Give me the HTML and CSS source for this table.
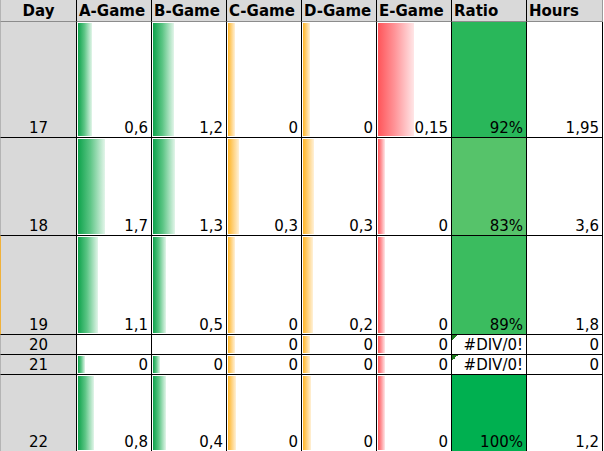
FILE: index.html
```html
<!DOCTYPE html>
<html>
<head>
<meta charset="utf-8">
<link rel="stylesheet" href="styles.css">
</head>
<body>
<div class="sheet">
  <div class="hd day">Day</div>
  <div class="hd">A-Game</div>
  <div class="hd">B-Game</div>
  <div class="hd">C-Game</div>
  <div class="hd">D-Game</div>
  <div class="hd">E-Game</div>
  <div class="hd">Ratio</div>
  <div class="hd last">Hours</div>

  <div class="c day">17</div>
  <div class="c g" style="--w:14px">0,6</div>
  <div class="c g" style="--w:21px">1,2</div>
  <div class="c o" style="--w:7px">0</div>
  <div class="c o" style="--w:7px">0</div>
  <div class="c r" style="--w:36px">0,15</div>
  <div class="c ratio p92">92%</div>
  <div class="c last">1,95</div>

  <div class="c day">18</div>
  <div class="c g" style="--w:27px">1,7</div>
  <div class="c g" style="--w:22px">1,3</div>
  <div class="c o" style="--w:11px">0,3</div>
  <div class="c o" style="--w:11px">0,3</div>
  <div class="c r" style="--w:7px">0</div>
  <div class="c ratio p83">83%</div>
  <div class="c last">3,6</div>

  <div class="c day sel">19</div>
  <div class="c g" style="--w:20px">1,1</div>
  <div class="c g" style="--w:13px">0,5</div>
  <div class="c o" style="--w:7px">0</div>
  <div class="c o" style="--w:10px">0,2</div>
  <div class="c r" style="--w:7px">0</div>
  <div class="c ratio p89">89%</div>
  <div class="c last">1,8</div>

  <div class="c day">20</div>
  <div class="c"></div>
  <div class="c"></div>
  <div class="c o" style="--w:7px">0</div>
  <div class="c o" style="--w:7px">0</div>
  <div class="c r" style="--w:7px">0</div>
  <div class="c err">#DIV/0!</div>
  <div class="c last">0</div>

  <div class="c day">21</div>
  <div class="c g" style="--w:7px">0</div>
  <div class="c g" style="--w:7px">0</div>
  <div class="c o" style="--w:7px">0</div>
  <div class="c o" style="--w:7px">0</div>
  <div class="c r" style="--w:7px">0</div>
  <div class="c err">#DIV/0!</div>
  <div class="c last">0</div>

  <div class="c day">22</div>
  <div class="c g" style="--w:16px">0,8</div>
  <div class="c g" style="--w:13px">0,4</div>
  <div class="c o" style="--w:8px">0</div>
  <div class="c o" style="--w:8px">0</div>
  <div class="c r" style="--w:7px">0</div>
  <div class="c ratio p100">100%</div>
  <div class="c last">1,2</div>
</div>
</body>
</html>
```
FILE: styles.css
```css
html, body {
  margin: 0;
  padding: 0;
  background: #ffffff;
}

.sheet {
  display: grid;
  grid-template-columns: 76px repeat(6, 75px) 77px;
  grid-template-rows: 22px 116px 98px 99px 20px 20px 77px;
  font-family: "DejaVu Sans", "Liberation Sans", sans-serif;
  color: #000;
}

.sheet > div {
  box-sizing: border-box;
  border-left: 1px solid #000;
  border-bottom: 1px solid #000;
}

.hd {
  background: #d9d9d9;
  font-weight: bold;
  font-size: 15px;
  line-height: 20px;
  padding-top: 1px;
  padding-left: 2px;
  text-align: left;
  border-bottom-color: #8c8c8c !important;
  white-space: nowrap;
  overflow: hidden;
}

.hd.day {
  text-align: center;
  padding-left: 0;
  border-left-color: #b4b4b4;
}

.hd.last {
  border-right: 1px solid #9a9a9a;
}

.c {
  display: flex;
  align-items: flex-end;
  justify-content: flex-end;
  font-size: 15px;
  line-height: 18px;
  padding-right: 3px;
  white-space: nowrap;
  background-repeat: no-repeat;
  background-position: 1px 1px;
  background-size: var(--w, 0px) calc(100% - 2px);
}

.c.last {
  border-right: 1px solid #000;
}

.c.day {
  background: #d9d9d9;
  justify-content: center;
  padding-right: 0;
  border-left-color: #b4b4b4;
}

.c.day.sel {
  border-left-color: #f0b13a;
}

.g {
  background-image: linear-gradient(to right, #0ea34c, #5cc585 45%, #e2f5e9);
}

.o {
  background-image: linear-gradient(to right, #ffb524, #ffd078 45%, #fff1d8);
}

.r {
  background-image: linear-gradient(to right, #ff555a, #ff9296 45%, #ffe6e7);
}

.ratio.p92 { background: #29b75a; }
.ratio.p83 { background: #56c36a; }
.ratio.p89 { background: #3bbc5f; }
.ratio.p100 { background: #00b050; }

.err {
  background-image: linear-gradient(135deg, #1d7a1d 50%, transparent 50%);
  background-size: 6px 6px;
  background-position: 0 0;
}
```
